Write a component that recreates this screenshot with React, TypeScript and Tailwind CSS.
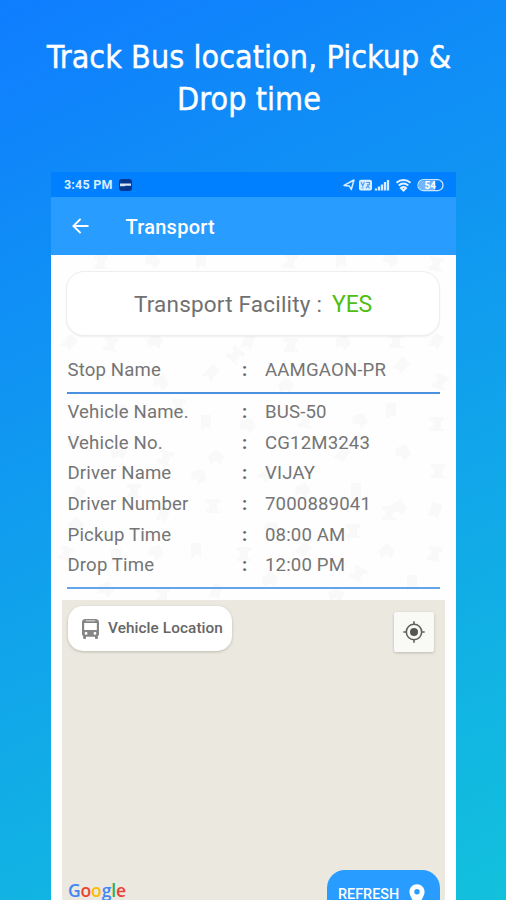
import { MdLocationOn } from "react-icons/md";

const vehicleDetails = [
  { label: "Vehicle Name.", value: "BUS-50" },
  { label: "Vehicle No.", value: "CG12M3243" },
  { label: "Driver Name", value: "VIJAY" },
  { label: "Driver Number", value: "7000889041" },
  { label: "Pickup Time", value: "08:00 AM" },
  { label: "Drop Time", value: "12:00 PM" },
];

// x, y, rotation, shape
const doodles: [number, number, number, number][] = [
  [50, 6, 0, 0], [102, 5, 20, 1], [150, 6, 0, 2], [240, 5, 10, 0], [290, 5, 0, 2], [340, 4, 30, 1], [385, 8, 10, 0],
  [18, 88, 40, 2], [60, 88, 10, 0], [104, 86, 0, 1], [197, 87, 20, 2], [240, 89, 0, 0], [292, 87, 15, 1], [345, 85, 0, 0], [385, 87, 30, 2],
  [110, 127, 20, 1], [160, 118, 40, 2], [185, 99, 40, 0], [235, 130, 0, 1], [350, 111, 45, 2], [390, 126, 20, 0],
  [70, 156, 30, 1], [128, 150, 0, 0], [155, 168, 0, 2], [197, 170, 20, 1], [255, 165, 10, 0], [309, 165, 20, 1], [340, 156, 0, 2], [386, 168, 0, 0],
  [25, 185, 10, 0], [68, 197, 0, 1], [115, 202, 20, 0], [165, 202, 0, 1], [215, 220, 45, 2], [291, 200, 40, 2], [352, 197, 20, 1], [387, 215, 0, 0],
  [27, 240, 30, 2], [83, 235, 0, 0], [148, 221, 30, 1], [252, 235, 15, 1], [305, 236, 0, 2], [338, 257, 0, 0], [384, 256, 20, 2],
  [25, 270, 0, 1], [112, 260, 20, 2], [162, 250, 0, 0], [221, 273, 45, 1], [302, 275, 0, 0], [348, 252, 10, 1],
  [16, 298, 20, 0], [65, 302, 0, 2], [105, 297, 30, 1], [145, 296, 0, 2], [193, 298, 0, 0], [252, 295, 45, 2], [336, 296, 0, 1], [384, 298, 10, 0],
  [55, 334, 20, 1], [112, 339, 0, 0], [165, 337, 20, 2], [219, 324, 0, 1], [308, 318, 30, 0], [361, 328, 0, 2], [285, 339, 0, 1],
];

const PatternBackdrop = () => (
  <svg className="absolute inset-0 h-full w-full" fill="#f9f9f9" aria-hidden="true">
    {doodles.map(([x, y, angle, shape], index) => (
      <g key={index} transform={`translate(${x} ${y}) rotate(${angle})`}>
        {shape === 0 && <path d="M-7-6h14v4h-3v8h3v2H-7V4h3v-6h-3z" />}
        {shape === 1 && <path d="M0-8 8-1 4 8l-4-4-6 3-2-8z" />}
        {shape === 2 && <path d="M-5-8H5V7L1 4-5 8z" />}
      </g>
    ))}
  </svg>
);

const StatusIcons = () => (
  <svg className="h-[14px] w-[102px]" viewBox="0 0 102 14" fill="none" aria-hidden="true">
    <path d="M1 7.4 11 2 8.3 11.5 6.3 8z" stroke="#d9edff" strokeWidth="1.5" strokeLinejoin="round" />
    <rect x="16" y="1.8" width="13" height="10.7" rx="2" fill="#d9edff" />
    <path d="m18 4 1.7 4 1.8-4M23.2 4.5h3.2v2.3h-2.6M18.5 10h2m2.5 0 2-2 1.5 2.5" stroke="#4299f7" strokeWidth="1.1" />
    <path d="M33 10.5v2m3-4v4m3-6v6m3-8.5v8.5m3-10.5v10.5" stroke="#d9edff" strokeWidth="2.3" />
    <path d="M53.5 4.7c4.2-3.5 9.8-3.5 14 0M55.7 7.5c2.9-2.4 6.7-2.4 9.6 0M58 10c1.5-1.3 3.5-1.3 5 0l-2.5 2.5z" stroke="#e4f2ff" strokeWidth="2" />
    <rect x="75" y="1.7" width="25" height="11" rx="5.5" stroke="#c9e5ff" strokeWidth="1.3" />
    <path d="M80 2.5h12v9.5H80a4.7 4.7 0 0 1 0-9.5" fill="#71b6fb" />
    <text x="87.3" y="10.7" textAnchor="middle" fill="#fff" className="font-['Roboto',sans-serif] text-[10px] font-bold">54</text>
  </svg>
);

const StatusBar = () => (
  <div className="flex h-[25px] items-center justify-between bg-[#0080ff] pr-[11px] pl-[13px]">
    <div className="flex items-center gap-[6px]">
      <span className="pt-[2px] text-[12.5px] font-bold tracking-[0.2px] text-[#d9edff]">3:45 PM</span>
      <svg className="h-3 w-[13px]" viewBox="0 0 13 12" aria-hidden="true">
        <rect width="13" height="12" rx="3" fill="#07388f" />
        <path d="M1 4.5h11v2.2H6v.6H1z" fill="#d7e7fb" />
      </svg>
    </div>
    <StatusIcons />
  </div>
);

const AppBar = () => (
  <header className="flex h-[58px] items-center bg-[#289cff] pl-[21px] text-white">
    <svg className="h-4 w-[17px]" viewBox="0 0 17 16" fill="none" stroke="currentColor" strokeWidth="1.9" aria-hidden="true">
      <path d="M16.5 8H1.5M8.6.8 1.4 8l7.2 7.2" />
    </svg>
    <h2 className="ml-[36.5px] pt-[2px] text-[20px] leading-6 font-medium tracking-[0.25px]">Transport</h2>
  </header>
);

const DetailRow = ({ label, value }: { label: string; value: string }) => (
  <div className="flex h-[30.7px] items-center text-[18.6px] tracking-[0.15px] text-[#757575]">
    <span className="w-[174.5px]">{label}</span>
    <span className="w-[23px] font-bold text-[#666]">:</span>
    <span>{value}</span>
  </div>
);

const TransportDetails = () => (
  <section className="relative h-[345px] bg-[#fefefe]">
    <PatternBackdrop />
    <div className="relative px-4 pt-4">
      <div className="-ml-px flex h-[65px] items-center justify-center rounded-[18px] border border-[#eeeeee] bg-white pt-[3px] text-[22.5px] tracking-[0.2px] text-[#707070] shadow-[0_1px_2px_#00000010]">
        Transport Facility :<span className="ml-[10px] text-[23px] tracking-[-0.2px] text-[#50bd13]">YES</span>
      </div>
      <div className="flex h-[58px] flex-col justify-end border-b-2 border-[#4a91df] pb-[6px] pl-[0.5px]">
        <DetailRow label="Stop Name" value="AAMGAON-PR" />
      </div>
      <div className="border-b-2 border-[#62a5e9] pt-[3.6px] pb-[5.4px] pl-[0.5px]">
        {vehicleDetails.map((detail) => (
          <DetailRow key={detail.label} {...detail} />
        ))}
      </div>
    </div>
  </section>
);

const VehicleMap = () => (
  <section className="mr-[11px] ml-[11px] flex h-[300px] flex-col justify-between bg-[#ebe8df]">
    <div className="flex items-start justify-between pt-[6px] pr-[11px] pl-[6px]">
      <div className="flex h-[45px] w-[164px] items-center rounded-[15px] bg-white pl-[14px] text-[#666] shadow-[0_1px_3px_#0003]">
        <svg className="h-5 w-[17px]" viewBox="0 0 18 20" preserveAspectRatio="none" fill="#858585" aria-hidden="true">
          <path fillRule="evenodd" d="M4 0h10c3 0 4 1.2 4 3.5V15c0 .9-.4 1.7-1.2 2.2V19c0 .6-.4 1-1 1h-1c-.6 0-1-.4-1-1v-1.2H4.2V19c0 .6-.4 1-1 1h-1c-.6 0-1-.4-1-1v-1.8A3 3 0 0 1 0 15V3.5C0 1.2 1 0 4 0m-1.7 4v7h13.4V4zm2 8.8a1.5 1.5 0 1 0 0 3 1.5 1.5 0 0 0 0-3m9.4 0a1.5 1.5 0 1 0 0 3 1.5 1.5 0 0 0 0-3M4 1.6v.7h10v-.7z" />
        </svg>
        <span className="mb-px ml-[9px] text-[15.3px] font-medium tracking-[0.1px] whitespace-nowrap">Vehicle Location</span>
      </div>
      <div className="mt-[6px] flex h-10 w-10 items-center justify-center rounded-xs bg-[#f9f9f6] pr-px shadow-[0_1px_3px_#0003]">
        <svg className="h-[22px] w-[22px]" viewBox="0 0 22 22" fill="none" stroke="#606060" aria-hidden="true">
          <circle cx="11" cy="11" r="7.7" strokeWidth="1.6" />
          <circle cx="11" cy="11" r="4" fill="#555" stroke="none" />
          <path d="M11 .3v3M11 18.7v3M.3 11h3M18.7 11h3" strokeWidth="1.6" />
        </svg>
      </div>
    </div>
    <div className="flex h-[30px] items-start justify-between overflow-hidden pr-[5px] pl-[6px]">
      <div className="pt-[10px] font-['Open_Sans',sans-serif] text-[17.5px] leading-[20px] font-semibold tracking-[-0.15px]">
        <span className="text-[#4285f4]">G</span>
        <span className="text-[#ea4335]">o</span>
        <span className="text-[#fbbc05]">o</span>
        <span className="text-[#4285f4]">g</span>
        <span className="text-[#34a853]">l</span>
        <span className="text-[#ea4335]">e</span>
      </div>
      <div className="flex h-[50px] w-[113px] shrink-0 items-center rounded-[18px] bg-[#289cff] pl-[11px] text-[14.4px] font-medium text-white">
        REFRESH
        <MdLocationOn className="mb-px ml-[5px] h-[26px] w-[26px]" />
      </div>
    </div>
  </section>
);

const App = () => {
  return (
    <main className="flex h-[900px] w-[506px] flex-col overflow-hidden bg-linear-155/srgb from-[#0f7dff] to-[#12c1dc] font-['Roboto',sans-serif]">
      <h1 className="h-[172px] shrink-0 pt-[36px] pr-2 text-center font-['DejaVu_Sans_Condensed','DejaVu_Sans',sans-serif] text-[32px] leading-[42px] tracking-[0.05px] text-white [font-stretch:condensed] [-webkit-text-stroke:0.4px_white]">
        Track Bus location, Pickup &amp;
        <br />
        Drop time
      </h1>
      <div className="ml-[51px] h-[728px] w-[405px] bg-white">
        <StatusBar />
        <AppBar />
        <TransportDetails />
        <VehicleMap />
      </div>
    </main>
  );
};

export default App;
